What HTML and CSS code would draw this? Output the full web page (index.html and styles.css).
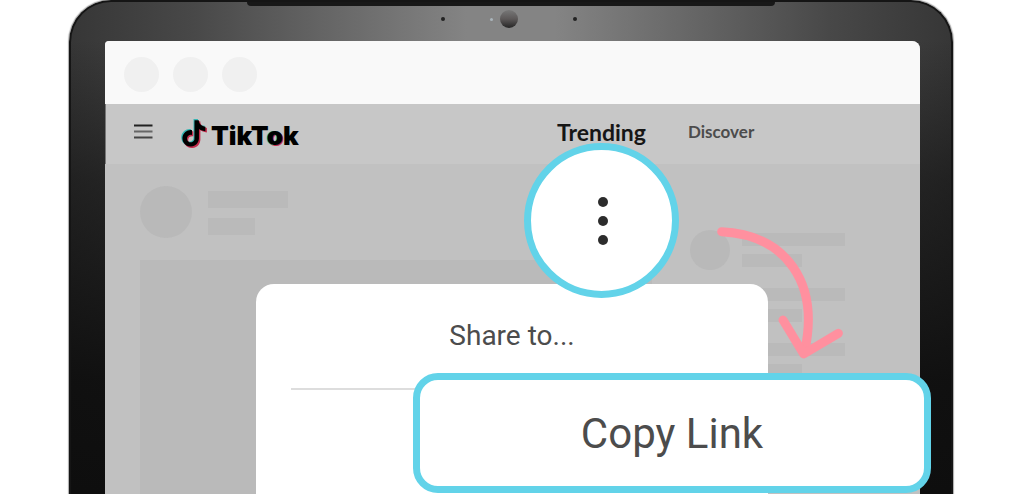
FILE: index.html
```
<!DOCTYPE html>
<html lang="en">
<head>
  <meta charset="utf-8">
  <title>TikTok - Copy Link</title>
  <link rel="stylesheet" href="styles.css">
</head>
<body>
  <div class="laptop">
    <div class="lid-top">
      <span class="lid-notch"></span>
      <span class="mic"></span>
      <span class="led"></span>
      <span class="camera"></span>
      <span class="mic"></span>
    </div>

    <div class="screen">
      <div class="browser-bar">
        <span></span>
        <span></span>
        <span></span>
      </div>

      <header class="header">
        <div class="brand">
          <button class="menu-btn" type="button" aria-label="Menu">
            <svg width="19" height="15" viewBox="0 0 19 15" fill="none" stroke-width="2">
              <path d="M0 1.5h18.500" stroke="#222"/>
              <path d="M0 7.500h18.500" stroke="#666"/>
              <path d="M0 13.500h18.500" stroke="#444"/>
            </svg>
          </button>
          <a class="logo" href="#" aria-label="TikTok">
            <svg width="26" height="30" viewBox="0 0 26 30">
              <defs>
                <path id="note" d="M12.525.02c1.31-.02 2.61-.01 3.91-.02.08 1.53.63 3.09 1.75 4.17 1.12 1.11 2.7 1.62 4.24 1.79v4.03c-1.44-.05-2.89-.35-4.2-.97-.57-.26-1.1-.59-1.62-.93-.01 2.92.01 5.84-.02 8.75-.08 1.4-.54 2.79-1.35 3.94-1.31 1.92-3.58 3.17-5.91 3.21-1.43.08-2.86-.31-4.08-1.03-2.02-1.19-3.44-3.37-3.65-5.71-.02-.5-.03-1-.01-1.49.18-1.9 1.12-3.72 2.58-4.96 1.66-1.44 3.98-2.13 6.15-1.72.02 1.48-.04 2.96-.04 4.44-.99-.32-2.15-.23-3.02.37-.63.41-1.11 1.04-1.36 1.75-.21.51-.15 1.07-.14 1.61.24 1.64 1.82 3.02 3.5 2.87 1.12-.01 2.19-.66 2.77-1.61.19-.33.4-.67.41-1.06.1-1.79.06-3.57.07-5.36.01-4.03-.01-8.05.02-12.07z"/>
              </defs>
              <use href="#note" fill="#35b5b3" transform="translate(-1.500 0) scale(1.12)"/>
              <use href="#note" fill="#c22c4c" transform="translate(.8 2.200) scale(1.12)"/>
              <use href="#note" fill="#000" transform="translate(-.3 1.200) scale(1.1)"/>
            </svg>
            <span>TikT<i>o</i>k</span>
          </a>
        </div>
        <nav class="nav">
          <a class="active" href="#">Trending</a>
          <a href="#">Discover</a>
        </nav>
      </header>

      <main class="feed">
        <div class="post">
          <div class="author">
            <span class="avatar"></span>
            <div class="lines">
              <span class="line"></span>
              <span class="line short"></span>
            </div>
          </div>
          <div class="video"></div>
        </div>
        <div class="suggestions">
          <div class="suggestion">
            <span class="avatar"></span>
            <div class="lines"><span class="line"></span><span class="line short"></span></div>
          </div>
          <div class="suggestion">
            <span class="avatar"></span>
            <div class="lines"><span class="line"></span><span class="line short"></span></div>
          </div>
          <div class="suggestion">
            <span class="avatar"></span>
            <div class="lines"><span class="line"></span><span class="line short"></span></div>
          </div>
        </div>
      </main>
    </div>

    <section class="share">
      <h2>Share to...</h2>
      <hr>
    </section>

    <button class="more-btn" type="button" aria-label="More options">
      <span></span>
      <span></span>
      <span></span>
    </button>

    <svg class="arrow" viewBox="142 52 378 396" fill="none" stroke="#ff909f" stroke-width="27" stroke-linecap="round" stroke-linejoin="round">
      <path d="M156 66C350 76 450 220 405 425"/>
      <path d="M340 331L402 433L506 371"/>
    </svg>

    <button class="copy-btn" type="button">Copy Link</button>
  </div>
</body>
</html>
```
FILE: styles.css
```
* {
  box-sizing: border-box;
}

body {
  margin: 0;
  background: #fff;
  font-family: Roboto, Arial, sans-serif;
  overflow: hidden;
}

button {
  margin: 0;
  padding: 0;
  border: none;
  background: none;
  font-family: inherit;
  cursor: pointer;
}

a {
  color: inherit;
  text-decoration: none;
}

/* Laptop lid */
.laptop {
  position: relative;
  display: flex;
  flex-direction: column;
  height: 100vh;
  margin: 0 71px 0 69px;
  padding: 0 31px 0 34px;
  border: solid #151515;
  border-width: 2px 2px 0;
  border-radius: 42px 42px 0 0;
  background:
    linear-gradient(to bottom, rgba(12, 12, 12, 0) 40px, rgba(12, 12, 12, 0.5) 180px, rgba(12, 12, 12, 0.9) 380px, #0e0e0e 100%),
    linear-gradient(to right, #363636 0, #484848 14%, #848484 45%, #848484 55%, #484848 86%, #363636 100%);
  background-origin: border-box;
  box-shadow: 0 0 1px 1px #aaa;
  overflow: hidden;
}

.lid-top {
  position: relative;
  flex: none;
  display: flex;
  align-items: center;
  justify-content: center;
  height: 39px;
  margin: 0 -31px 0 -34px;
  padding: 0 4px 5px 0;
}

.lid-notch {
  position: absolute;
  top: 0;
  left: 20%;
  right: 20%;
  height: 4px;
  background: #181818;
  border-radius: 0 0 4px 4px;
}

.mic {
  width: 4px;
  height: 4px;
  border-radius: 50%;
  background: #222;
}

.led {
  width: 3px;
  height: 3px;
  margin: 0 7px 0 45px;
  border-radius: 50%;
  background: #aab4bb;
}

.camera {
  width: 18px;
  height: 18px;
  margin-right: 55px;
  border-radius: 50%;
  background: linear-gradient(#777, #5c5858 50%, #252525);
}

/* Screen */
.screen {
  flex: 1;
  display: flex;
  flex-direction: column;
  border-radius: 4px 8px 0 0;
  background: #c1c1c1;
  overflow: hidden;
}

.browser-bar {
  flex: none;
  display: flex;
  align-items: center;
  gap: 14px;
  height: 63px;
  padding: 4px 19px 0;
  background: #f9f9f9;
}

.browser-bar span {
  width: 35px;
  height: 35px;
  border-radius: 50%;
  background: #f0f0f0;
}

.header {
  flex: none;
  display: grid;
  grid-template-columns: 1fr 1fr;
  align-items: center;
  height: 60px;
  border-left: 1px solid #777;
  background: #c7c7c7;
}

.brand {
  display: flex;
  align-items: center;
  padding-left: 28px;
}

.menu-btn {
  display: flex;
  padding-bottom: 6px;
}

.logo {
  display: flex;
  align-items: center;
  gap: 4px;
  margin-left: 28px;
  color: #000;
  font: 900 26px/30px Inter, sans-serif;
}

.logo span {
  padding-top: 4px;
}

.logo i {
  font-style: normal;
  text-shadow: -1px 0 #35b5b3, 1px 1px #c22c4c;
}

.nav {
  display: flex;
  align-items: center;
  gap: 42px;
  padding: 0 0 4px 44px;
  color: #4c4c4c;
  font: 700 17px/28px Lato, sans-serif;
}

.nav .active {
  color: #161616;
  font-size: 23px;
}

/* Placeholder content */
.feed {
  flex: 1;
  display: grid;
  grid-template-columns: 512px 1fr;
  gap: 38px;
  padding: 22px 75px 0 35px;
}

.post {
  display: flex;
  flex-direction: column;
  gap: 22px;
}

.author,
.suggestion {
  display: flex;
}

.author {
  gap: 16px;
}

.avatar {
  flex: none;
  width: 52px;
  height: 52px;
  border-radius: 50%;
  background: #b9b9b9;
}

.lines {
  display: flex;
  flex-direction: column;
  gap: 10px;
  padding-top: 5px;
}

.line {
  width: 80px;
  height: 17px;
  background: #bababa;
}

.line.short {
  width: 47px;
}

.video {
  flex: 1;
  background: #bababa;
}

.suggestions {
  display: flex;
  flex-direction: column;
  gap: 15px;
  padding-top: 44px;
}

.suggestion {
  gap: 12px;
}

.suggestion .avatar {
  width: 40px;
  height: 40px;
}

.suggestion .lines {
  flex: 1;
  gap: 8px;
  padding-top: 3px;
}

.suggestion .line {
  width: 100%;
  height: 13px;
}

.suggestion .line.short {
  width: 58%;
}

/* Share sheet */
.share {
  position: absolute;
  top: 282px;
  bottom: 0;
  left: 50%;
  width: 512px;
  margin-left: -255px;
  padding: 34px 35px 0;
  border-radius: 18px 18px 0 0;
  background: #fff;
}

.share h2 {
  margin: 0 0 34px;
  color: #4c4c4c;
  font-size: 28px;
  font-weight: 400;
  line-height: 36px;
  text-align: center;
}

.share hr {
  height: 2px;
  margin: 0;
  border: none;
  background: #ddd;
}

/* Highlights */
.more-btn {
  position: absolute;
  top: 141px;
  left: 50%;
  display: flex;
  flex-direction: column;
  align-items: center;
  justify-content: center;
  gap: 9px;
  width: 155px;
  height: 155px;
  margin-left: 13px;
  padding-left: 3px;
  border: 7px solid #62d3e9;
  border-radius: 50%;
  background: #fff;
}

.more-btn span {
  width: 10px;
  height: 10px;
  border-radius: 50%;
  background: #2c2c2c;
}

.arrow {
  position: absolute;
  top: 225px;
  left: 50%;
  width: 126px;
  height: 132px;
  margin-left: 206px;
}

.copy-btn {
  position: absolute;
  top: 371px;
  left: 50%;
  width: 518px;
  height: 120px;
  margin-left: -98px;
  border: 7px solid #62d3e9;
  border-radius: 25px;
  background: #fff;
  color: #4c4c4c;
  font-size: 42px;
}
```
